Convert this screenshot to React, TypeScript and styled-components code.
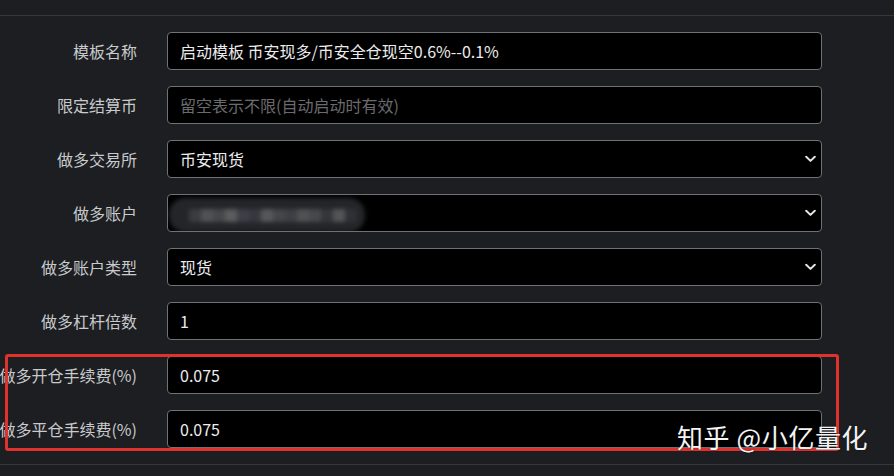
import styled, { createGlobalStyle } from 'styled-components';

const GlobalStyle = createGlobalStyle`
  html, body {
    margin: 0;
    padding: 0;
    background: #1c1e22;
    font-family: "Microsoft YaHei", "Noto Sans CJK SC", "Noto Sans", sans-serif;
  }
  body {
    width: 894px;
    height: 476px;
    overflow: hidden;
    position: relative;
  }
`;

type Field = {
  label: string;
  value?: string;
  placeholder?: string;
  select?: boolean;
  redacted?: boolean;
};

const fields: Field[] = [
  { label: '模板名称', value: '启动模板 币安现多/币安全仓现空0.6%--0.1%' },
  { label: '限定结算币', placeholder: '留空表示不限(自动启动时有效)' },
  { label: '做多交易所', value: '币安现货', select: true },
  { label: '做多账户', select: true, redacted: true },
  { label: '做多账户类型', value: '现货', select: true },
  { label: '做多杠杆倍数', value: '1' },
];

const feeFields: Field[] = [
  { label: '做多开仓手续费(%)', value: '0.075' },
  { label: '做多平仓手续费(%)', value: '0.075' },
];

// blurred account name, drawn as a mosaic
const mosaic = ['#3a3c40', '#505255', '#45474b', '#5a5c5d', '#3c3f45', '#35383e', '#55575a', '#44464a', '#3d3f44', '#4f5153', '#46484b', '#34363b', '#525456', '#2f3136'];

const Chevron = () => (
  <svg width="11" height="7" viewBox="0 0 11 7" fill="none">
    <path d="M1.2 1.2 L5.5 5.4 L9.8 1.2" stroke="#e4e4e4" strokeWidth="2" strokeLinecap="round" strokeLinejoin="round" />
  </svg>
);

const FormRow = ({ field }: { field: Field }) => (
  <Row>
    <Label>{field.label}</Label>
    <InputBox>
      {field.value && <Value>{field.value}</Value>}
      {field.placeholder && <Placeholder>{field.placeholder}</Placeholder>}
      {field.redacted && (
        <Redacted>
          <Cells>
            {mosaic.map((c, i) => (
              <Cell key={i} style={{ background: c }} />
            ))}
          </Cells>
        </Redacted>
      )}
      {field.select && (
        <Arrow>
          <Chevron />
        </Arrow>
      )}
    </InputBox>
  </Row>
);

export default function App() {
  return (
    <>
      <GlobalStyle />
      <Page>
        <Panel>
          {fields.map((f) => (
            <FormRow key={f.label} field={f} />
          ))}
          <Highlight>
            {feeFields.map((f) => (
              <FormRow key={f.label} field={f} />
            ))}
          </Highlight>
        </Panel>
        <Watermark>知乎 @小亿量化</Watermark>
      </Page>
    </>
  );
}

const Page = styled.div`
  padding-top: 15px;
  height: 476px;
  box-sizing: border-box;
`;

const Panel = styled.div`
  border-top: 1px solid #34373d;
  border-bottom: 1px solid #34373d;
  padding: 16px 0 16px;
  display: flex;
  flex-direction: column;
  gap: 16px;
  width: 894px;
`;

const Highlight = styled.div`
  position: relative;
  display: flex;
  flex-direction: column;
  gap: 16px;

  &::after {
    content: '';
    position: absolute;
    left: 5px;
    top: -2px;
    width: 834px;
    height: 97px;
    border: 3px solid #e0312d;
    border-radius: 3px;
    box-sizing: border-box;
    pointer-events: none;
  }
`;

const Row = styled.div`
  display: grid;
  grid-template-columns: 137px 655px;
  column-gap: 30px;
  align-items: center;
  height: 38px;
`;

const Label = styled.div`
  display: flex;
  justify-content: flex-end;
  white-space: nowrap;
  font-size: 16px;
  color: #c9cacc;
`;

const InputBox = styled.div`
  position: relative;
  height: 38px;
  box-sizing: border-box;
  border: 1px solid #6e7176;
  border-radius: 4px;
  background: #000;
  display: flex;
  align-items: center;
  padding: 0 12px;
  font-size: 16px;
  overflow: hidden;
`;

const Value = styled.span`
  color: #ececec;
  white-space: nowrap;
`;

const Placeholder = styled.span`
  color: #6a6b6e;
  white-space: nowrap;
`;

const Arrow = styled.span`
  position: absolute;
  right: 5px;
  top: 50%;
  transform: translateY(-50%);
  display: flex;
`;

const Redacted = styled.div`
  position: absolute;
  left: 1px;
  top: 3px;
  width: 196px;
  height: 34px;
  border-radius: 16px;
  background: #232529;
  filter: blur(2px);
  display: flex;
  align-items: center;
  padding-left: 20px;
  box-sizing: border-box;
`;

const Cells = styled.div`
  display: flex;
  height: 13px;
`;

const Cell = styled.div`
  width: 12px;
  height: 13px;
`;

const Watermark = styled.div`
  position: absolute;
  left: 677px;
  top: 418px;
  font-size: 26px;
  letter-spacing: 0.6px;
  color: #f4f4f4;
  text-shadow: 0 0 2px rgba(0, 0, 0, 0.6);
  white-space: nowrap;
  pointer-events: none;
`;
